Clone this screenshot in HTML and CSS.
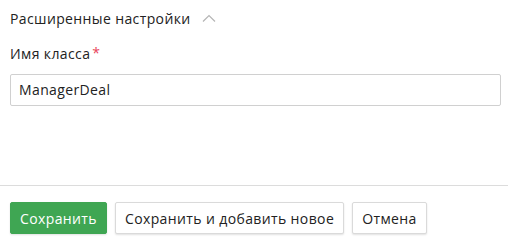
FILE: index.html
```html
<!DOCTYPE html>
<html lang="ru">
<head>
<meta charset="utf-8">
<link rel="stylesheet" href="styles.css">
</head>
<body>
<div class="page">
  <div class="content">
    <div class="section-title">
      <span>Расширенные настройки</span>
      <svg class="chevron" width="14" height="8" viewBox="0 0 14 8"><path d="M1 7.5 L7 1.5 L13 7.5" fill="none" stroke="#b5b5b5" stroke-width="1.2"/></svg>
    </div>
    <label class="field-label">Имя класса<span class="req">*</span></label>
    <div class="input">ManagerDeal</div>
  </div>
  <div class="footer">
    <button class="btn btn-primary">Сохранить</button>
    <button class="btn">Сохранить и добавить новое</button>
    <button class="btn">Отмена</button>
  </div>
</div>
</body>
</html>
```
FILE: styles.css
```css
html, body {
  margin: 0;
  padding: 0;
  background: #fff;
}
body {
  font-family: "Open Sans", "Noto Sans", sans-serif;
  font-size: 14px;
  letter-spacing: 0.38px;
  color: #222;
  width: 508px;
  height: 241px;
  overflow: hidden;
}
.page {
  display: flex;
  flex-direction: column;
  height: 241px;
}
.content {
  padding: 9px 7px 0 10px;
  height: 176px;
  display: flex;
  flex-direction: column;
}
.section-title {
  display: flex;
  align-items: center;
  gap: 11px;
  height: 20px;
  line-height: 20px;
  color: #222;
}
.chevron {
  display: block;
  margin-top: -2px;
}
.field-label {
  display: block;
  margin-top: 15px;
  line-height: 20px;
  height: 20px;
}
.req {
  color: #e8445a;
  margin-left: 2px;
  position: relative;
  top: -1px;
}
.input {
  margin-top: 10px;
  height: 30px;
  border: 1px solid #d0d0d0;
  border-radius: 2px;
  line-height: 30px;
  padding: 0 8px;
  color: #222;
}
.footer {
  border-top: 1px solid #dcdcdc;
  padding: 16px 10px 0;
  display: flex;
  gap: 8px;
}
.btn {
  font-family: inherit;
  font-size: 14px;
  letter-spacing: 0.38px;
  height: 32px;
  padding: 0 9px;
  border: 1px solid #dadada;
  border-radius: 2px;
  background: #fff;
  color: #222;
  box-shadow: 0 1px 2px rgba(0,0,0,0.12);
  cursor: pointer;
}
.btn-primary {
  background: #3fa653;
  border-color: #3fa653;
  color: #fff;
}
```
